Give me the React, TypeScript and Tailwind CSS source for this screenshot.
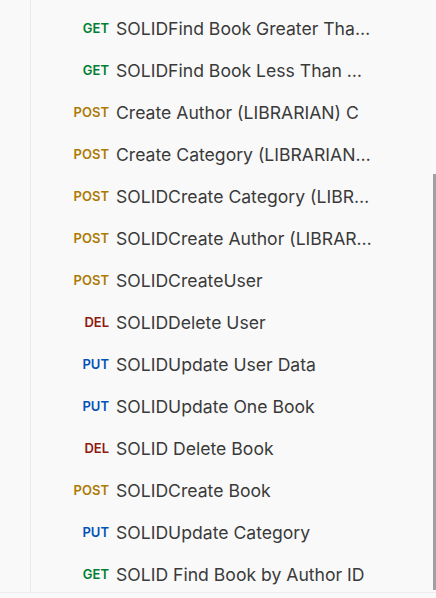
const methodColor: Record<string, string> = {
  GET: 'text-[#007f31]',
  POST: 'text-[#ad7a03]',
  PUT: 'text-[#0053b8]',
  DEL: 'text-[#8e1a10]',
};

const requests: { method: string; name: string }[] = [
  { method: 'GET', name: 'SOLIDFind Book Greater Than Price' },
  { method: 'GET', name: 'SOLIDFind Book Less Than Max Price' },
  { method: 'POST', name: 'Create Author (LIBRARIAN) C' },
  { method: 'POST', name: 'Create Category (LIBRARIAN) C' },
  { method: 'POST', name: 'SOLIDCreate Category (LIBRARIAN)' },
  { method: 'POST', name: 'SOLIDCreate Author (LIBRARIAN)' },
  { method: 'POST', name: 'SOLIDCreateUser' },
  { method: 'DEL', name: 'SOLIDDelete User' },
  { method: 'PUT', name: 'SOLIDUpdate User Data' },
  { method: 'PUT', name: 'SOLIDUpdate One Book' },
  { method: 'DEL', name: 'SOLID Delete Book' },
  { method: 'POST', name: 'SOLIDCreate Book' },
  { method: 'PUT', name: 'SOLIDUpdate Category' },
  { method: 'GET', name: 'SOLID Find Book by Author ID' },
];

export default function App() {
  return (
    <div
      className="relative h-[598px] w-[436px] overflow-hidden bg-[#f9f9f9]"
      style={{ fontFamily: 'Inter, "Noto Sans", sans-serif' }}
    >
      <div className="flex h-[593px] overflow-hidden border-b border-[#ededed]">
        <div className="w-[31px] shrink-0 border-r border-[#e8e8e8]" />
        <div className="flex-1 pt-[8px]">
          {requests.map((r, i) => (
            <div key={i} className="flex h-[42px] items-center">
              <span
                className={`w-[78px] shrink-0 text-right text-[13px] font-semibold ${methodColor[r.method]}`}
              >
                {r.method}
              </span>
              <span className="ml-[7px] max-w-[260px] truncate text-[17.6px] text-[#3a3a3a]">
                {r.name}
              </span>
            </div>
          ))}
        </div>
      </div>
      {/* scrollbar thumb */}
      <div className="absolute right-0 top-[174px] h-[416px] w-[3px] bg-[#a0a0a0]" />
    </div>
  );
}
